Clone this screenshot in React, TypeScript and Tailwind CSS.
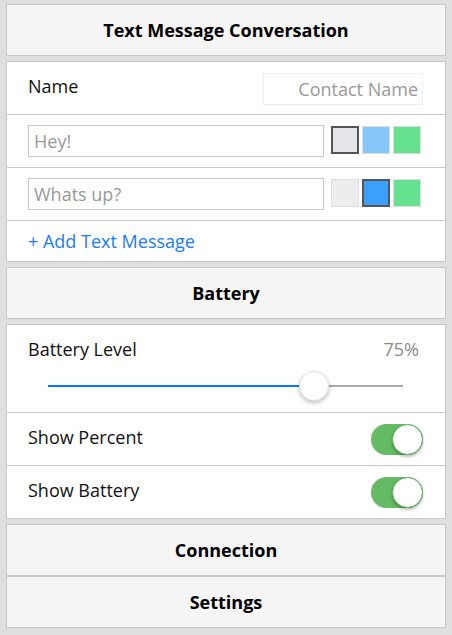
import React, { useState } from 'react'

const font = { fontFamily: '"Open Sans", "Noto Sans", sans-serif' }

function SectionHeader({ title }: { title: string }) {
  return (
    <div className="h-[52px] border border-[#c8c8c8] bg-[#f5f5f5] flex items-center justify-center">
      <span className="text-[18px] font-bold text-black">{title}</span>
    </div>
  )
}

function Swatch({ color, selected }: { color: string; selected?: boolean }) {
  return (
    <div
      className={
        selected
          ? 'w-[28px] h-[28px] border-2 border-[#555555]'
          : 'w-[28px] h-[28px] border border-[#dddddd]'
      }
      style={{ backgroundColor: color }}
    />
  )
}

function MessageRow({ text, colors, selected }: { text: string; colors: string[]; selected: number }) {
  return (
    <div className="h-[53px] border-b border-[#c8c8c8] flex items-center pl-[21px] pr-[22px]">
      <input
        placeholder={text}
        className="w-[296px] h-[32px] border border-[#c8c8c8] px-[5px] text-[18px] text-[#333] placeholder:text-[#999999] outline-none"
      />
      <div className="ml-[7px] flex gap-[3px] mt-[-3px]">
        {colors.map((c, i) => (
          <Swatch key={i} color={c} selected={i === selected} />
        ))}
      </div>
    </div>
  )
}

function Toggle({ on }: { on: boolean }) {
  return (
    <div className={`relative w-[52px] h-[31px] rounded-full ${on ? 'bg-[#64bb64]' : 'bg-[#dddddd]'}`}>
      <div
        className={`absolute top-0 w-[31px] h-[31px] rounded-full bg-white border border-[#5aae5a] shadow-[0_2px_3px_rgba(0,0,0,0.25)] ${on ? 'right-0' : 'left-0'}`}
      />
    </div>
  )
}

function ToggleRow({ label }: { label: string }) {
  return (
    <div className="h-[53px] border-b border-[#c8c8c8] flex items-center justify-between pl-[21px] pr-[22px]">
      <span className="text-[18px] text-[#111] mt-[-4px]">{label}</span>
      <Toggle on />
    </div>
  )
}

export default function App() {
  const [level] = useState(75)

  return (
    <div className="w-[452px] h-[635px] bg-[#dfdfdf] px-[6px] pt-[4px]" style={font}>
      <SectionHeader title="Text Message Conversation" />

      <div className="mt-[5px] border border-b-0 border-[#c8c8c8] bg-white">
        <div className="h-[53px] border-b border-[#c8c8c8] flex items-center justify-between pl-[21px] pr-[22px]">
          <span className="text-[18px] text-[#111] mt-[-4px]">Name</span>
          <input
            placeholder="Contact Name"
            className="w-[160px] h-[32px] border border-[#eeeeee] px-[4px] text-right text-[18px] placeholder:text-[#999999] outline-none mt-[1px]"
          />
        </div>
        <MessageRow text="Hey!" colors={['#e5e5ea', '#85c6fb', '#65e28f']} selected={0} />
        <MessageRow text="Whats up?" colors={['#ededf0', '#3aa0fc', '#65e28f']} selected={1} />
        <div className="h-[41px] border-b border-[#c8c8c8] flex items-center pl-[21px]">
          <span className="text-[18px] text-[#1a7cf5]">+ Add Text Message</span>
        </div>
      </div>

      <div className="mt-[5px]">
        <SectionHeader title="Battery" />
      </div>

      <div className="mt-[5px] border border-b-0 border-[#c8c8c8] bg-white">
        <div className="h-[88px] border-b border-[#c8c8c8] pl-[21px] pr-[26px] pt-[11px]">
          <div className="flex justify-between items-center">
            <span className="text-[18px] text-[#111]">Battery Level</span>
            <span className="text-[18px] text-[#8a8a8a]">{level}%</span>
          </div>
          <div className="relative ml-[20px] mr-[16px] mt-[8px] h-[30px] flex items-center">
            <div className="h-[2px] bg-[#007aff]" style={{ width: `${level}%` }} />
            <div className="h-[2px] flex-1 bg-[#aaaaaa]" />
            <div
              className="absolute top-0 w-[30px] h-[30px] rounded-full bg-white border border-[#e2e2e2] shadow-[0_2px_4px_rgba(0,0,0,0.25)]"
              style={{ left: `calc(${level}% - 15px)` }}
            />
          </div>
        </div>
        <ToggleRow label="Show Percent" />
        <ToggleRow label="Show Battery" />
      </div>

      <div className="mt-[5px]">
        <SectionHeader title="Connection" />
      </div>
      <SectionHeader title="Settings" />
    </div>
  )
}
